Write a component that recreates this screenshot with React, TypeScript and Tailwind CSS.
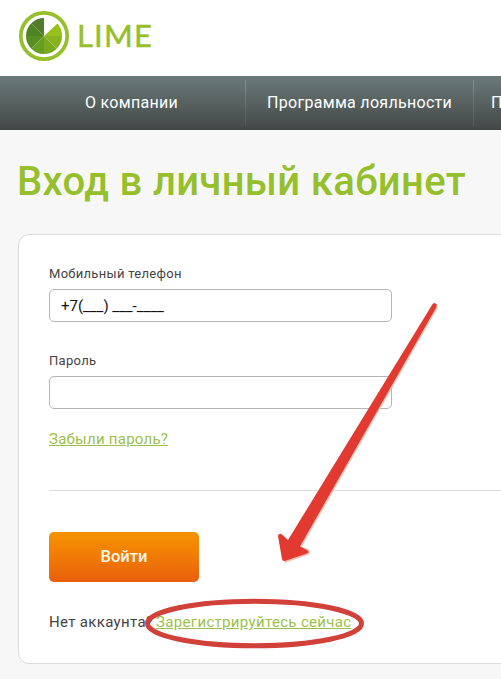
function Logo() {
  return (
    <div className="flex items-center">
      <svg width="52" height="52" viewBox="0 0 52 52" className="shrink-0">
        <circle cx="26" cy="26" r="23.2" fill="#fff" stroke="#95bf2b" strokeWidth="3.7" />
        <path d="M26 26V8A18 18 0 0 0 13.3 13.3Z" fill="#527c2c" />
        <path d="M26 26L13.3 13.3A18 18 0 0 0 8 26Z" fill="#508422" />
        <path d="M26 26H8A18 18 0 0 0 13.3 38.7Z" fill="#588f20" />
        <path d="M26 26L13.3 38.7A18 18 0 0 0 26 44Z" fill="#689e1f" />
        <path d="M26 26V44A18 18 0 0 0 38.7 38.7Z" fill="#78a91e" />
        <path d="M26 26L38.7 38.7A18 18 0 0 0 44 26Z" fill="#86b31e" />
        <path d="M26 26H44A18 18 0 0 0 39.5 13.5Z" fill="#96c01c" />
      </svg>
      <span className="-mt-[3px] ml-[7px] font-['Lato',sans-serif] text-[31px] leading-9 tracking-[1.2px] text-[#95bf2b] [-webkit-text-stroke:0.5px_#95bf2b]">LIME</span>
    </div>
  );
}

function Field({ label, value }: { label: string; value: string }) {
  return (
    <label className="block w-[343px]">
      <span className="block h-[23px] text-[13px] leading-[15px] tracking-[0.3px] text-[#444]">{label}</span>
      <input
        defaultValue={value}
        className="block h-[33px] w-full rounded-[5px] border border-[#b5b5b5] bg-white px-[11px] text-[15px] text-[#111] outline-none"
      />
    </label>
  );
}

export default function App() {
  return (
    <div className="relative h-[679px] w-[501px] overflow-hidden bg-[#f7f7f7] font-['Roboto',sans-serif]">
      <header className="h-[76px] bg-white pt-[10px] pl-[18px]">
        <Logo />
      </header>
      <nav className="flex h-[54px] items-center bg-linear-to-b from-[#6b7b79] to-[#434847] text-base whitespace-nowrap text-white">
        <a className="w-[245px] shrink-0 pl-[85px] tracking-[0.3px]">О компании</a>
        <span className="h-[46px] w-px shrink-0 bg-linear-to-b from-[#84918f] to-[#515957]" />
        <a className="w-[227px] shrink-0 pl-[21px] tracking-[0.3px]">Программа лояльности</a>
        <span className="h-[46px] w-px shrink-0 bg-linear-to-b from-[#84918f] to-[#515957]" />
        <a className="pl-[17px]">П</a>
      </nav>
      <main className="pl-[18px]">
        <h1 className="-ml-px h-[104px] pt-[28px] text-[40px] leading-[48px] font-medium tracking-[0.35px] whitespace-nowrap text-[#95bf2b]">
          Вход в личный кабинет
        </h1>
        <section className="h-[430px] w-[520px] rounded-[11px] border border-[#dcdcdc] bg-white pt-[31px] pl-[30px]">
          <Field label="Мобильный телефон" value="+7(___) ___-____" />
          <div className="pt-[31px]">
            <Field label="Пароль" value="" />
          </div>
          <a className="mt-5 block h-5 w-fit text-[15px] leading-5 tracking-[0.25px] text-[#9abf4a] underline">Забыли пароль?</a>
          <hr className="mt-[41px] border-[#dcdcdc]" />
          <button className="mt-[41px] block h-[50px] w-[150px] rounded-[5px] bg-linear-to-b from-[#f59300] to-[#ea5f0b] text-[16.5px] font-medium text-[#fff6e6]">
            Войти
          </button>
          <p className="mt-[30px] flex text-[15px] leading-5 tracking-[0.33px] whitespace-nowrap text-[#444]">
            <span className="w-[107px]">Нет аккаунта?</span>
            <a className="text-[#9abf4a] underline">Зарегистрируйтесь сейчас</a>
          </p>
        </section>
      </main>
      <svg className="pointer-events-none absolute inset-0" width="501" height="679" viewBox="0 0 501 679">
        <path d="M436.500 306L300 546L307 549Q310 552 307 553L284 561" fill="none" stroke="#f3c4b6" strokeWidth="2" transform="translate(0.5 1)" />
        <path d="M432.300 304.500Q434.500 301.500 436.800 304.500L436.500 307L300 546.500L307 550Q310 552 307 553.500L285 561Q282.500 561.500 282 559L278 536Q279 532.500 282 534.500L288 540Z" fill="#e23a30" />
        <ellipse cx="254.500" cy="623.500" rx="107" ry="22.200" fill="none" stroke="#d2403a" strokeWidth="5" />
      </svg>
    </div>
  );
}
